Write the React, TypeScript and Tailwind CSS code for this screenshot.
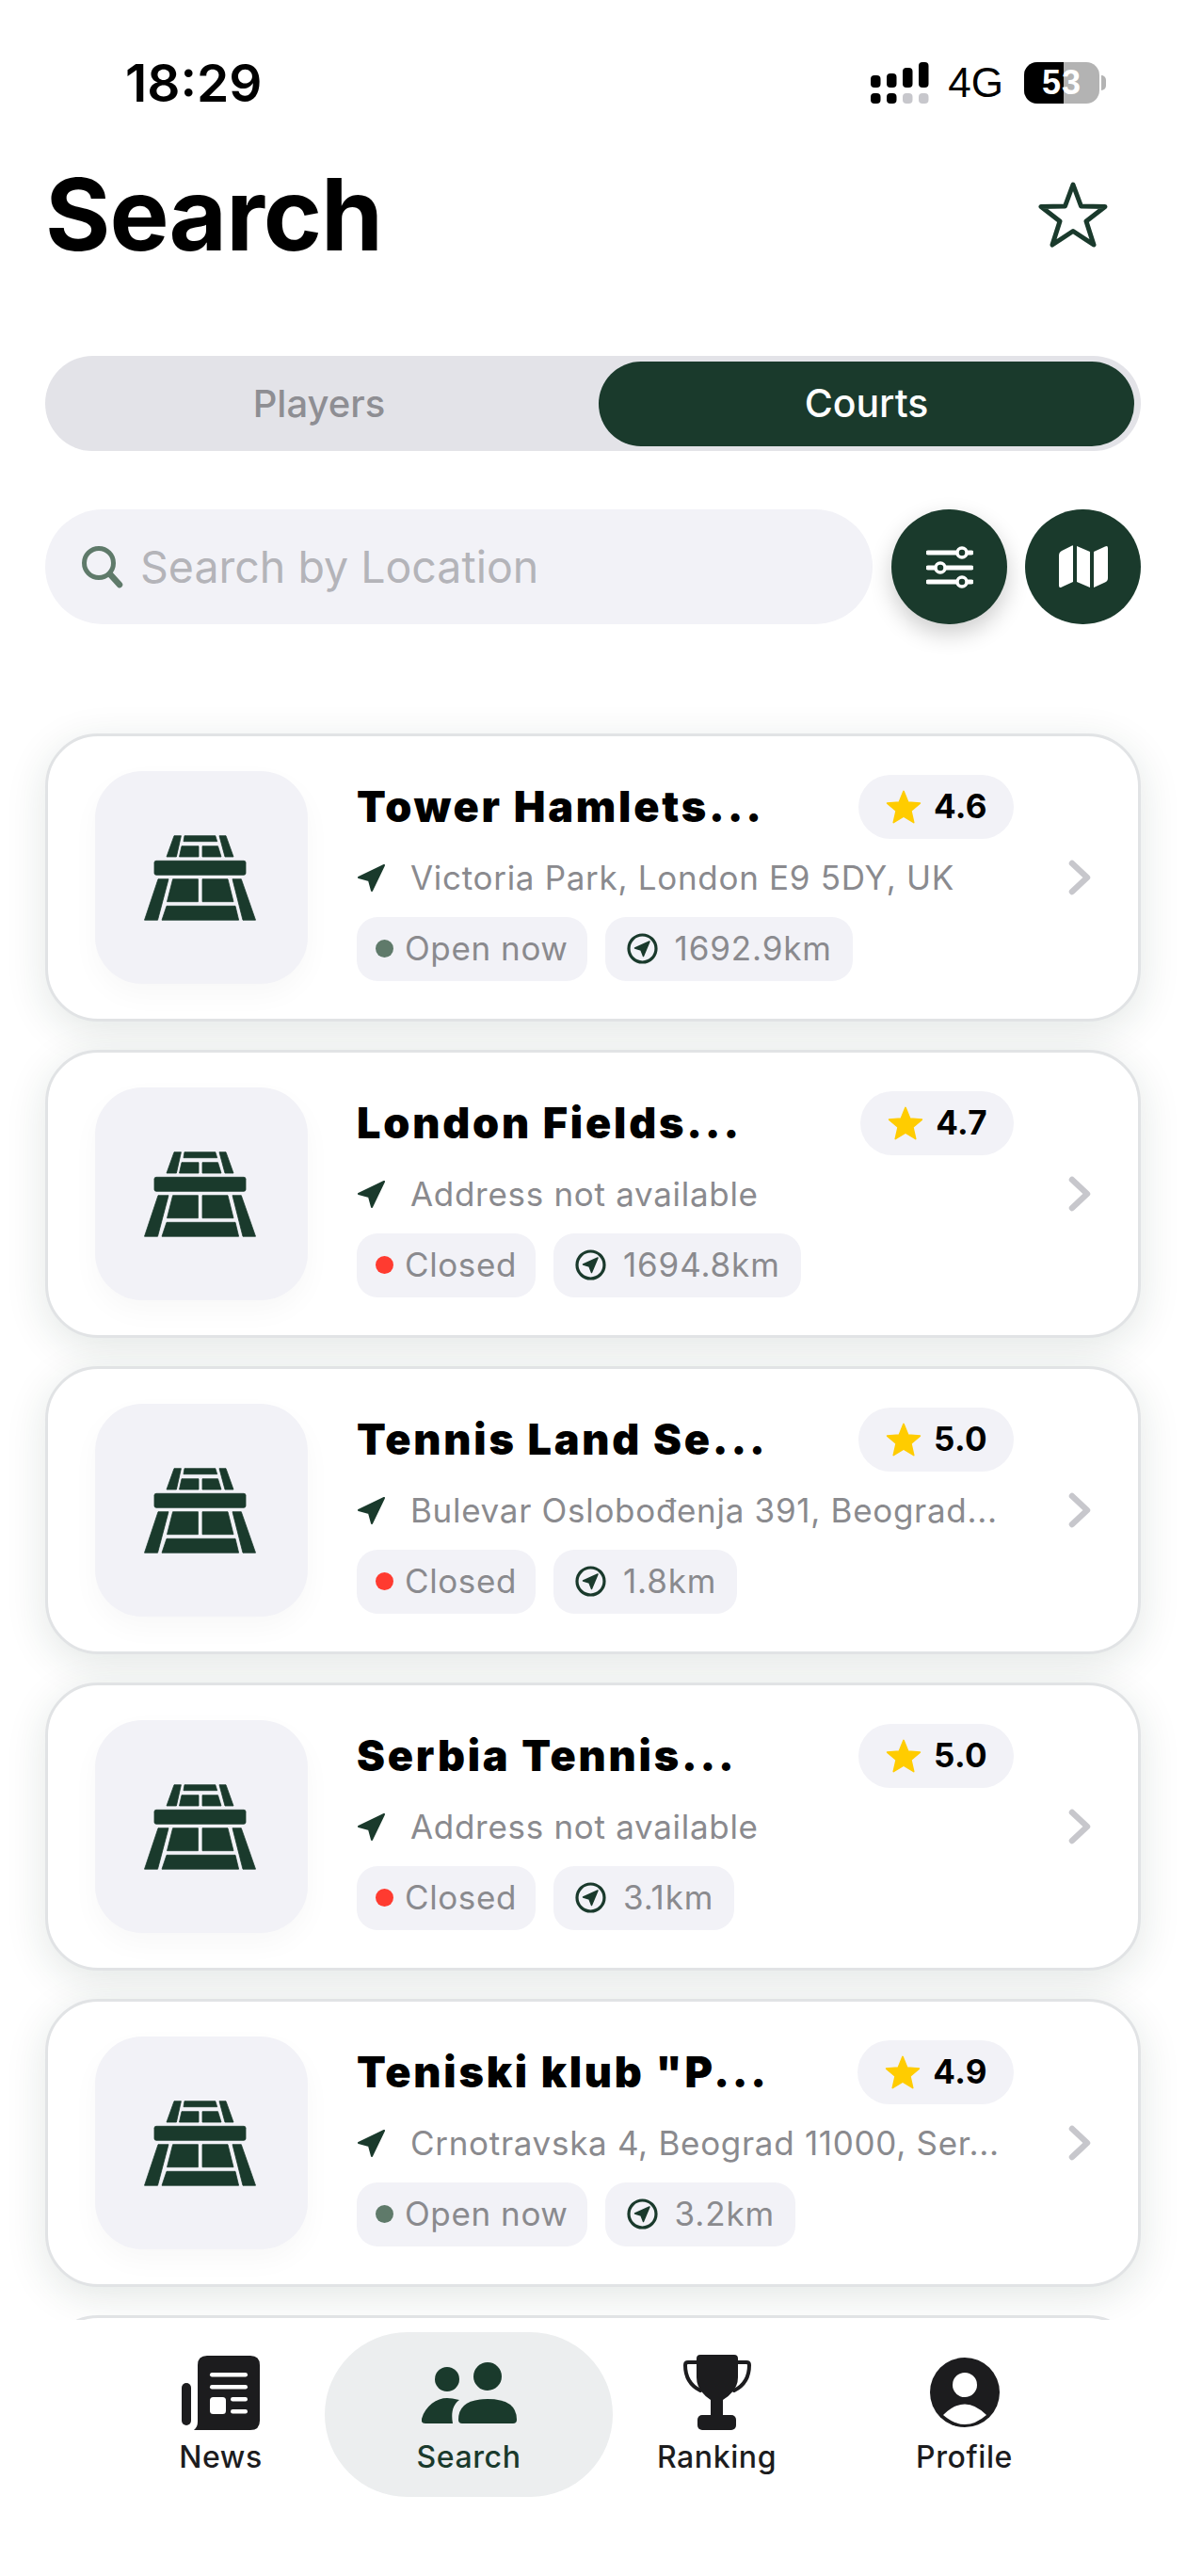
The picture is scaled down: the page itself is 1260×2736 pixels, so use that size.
import React from "react";

const GREEN = "#1a3a2c";

function CourtIcon() {
  const polys = [
    "32,0.7 39.4,0.7 34.4,23 24,23",
    "43,0.7 75.8,0.7 77.7,6.7 42,6.7",
    "40,11.7 58,11.7 58,23 37.5,23",
    "62,11.7 78.5,11.7 82,23 62,23",
    "80,0.7 87,0.7 95,23 86,23",
    "15,46.7 26,46.7 14.5,90.2 0.5,90.2",
    "30.6,46.7 57.4,46.7 57.4,70.7 24.5,70.7",
    "62,46.7 89,46.7 95,70.7 62,70.7",
    "24,75.3 97,75.3 100.6,90.2 19,90.2",
    "94,46.7 103.3,46.7 118.5,90.2 105,90.2",
  ];
  return (
    <svg width="119" height="91" viewBox="0 0 119 91" fill={GREEN} stroke={GREEN} strokeWidth="0.8" strokeLinejoin="round">
      {polys.map((p) => (
        <polygon key={p} points={p} />
      ))}
      <rect x="11" y="27.3" width="97" height="15" rx="2" />
    </svg>
  );
}

function NavArrow({ size = 31 }: { size?: number }) {
  return (
    <svg width={size} height={size} viewBox="0 0 31 31" fill={GREEN} stroke={GREEN} strokeWidth="2" strokeLinejoin="round">
      <path d="M29 2 L2 15 L13 18 L16 29 Z" />
    </svg>
  );
}

function DistanceIcon() {
  return (
    <svg width="33" height="33" viewBox="0 0 33 33" fill="none">
      <circle cx="16.5" cy="16.5" r="14.5" stroke={GREEN} strokeWidth="3.2" />
      <path d="M24 9 L8.5 16 L15 18 L17.5 24.5 Z" fill={GREEN} stroke={GREEN} strokeWidth="1.5" strokeLinejoin="round" />
    </svg>
  );
}

type Court = {
  name: string;
  rating: string;
  address: string;
  open: boolean;
  dist: string;
};

const courts: Court[] = [
  { name: "Tower Hamlets...", rating: "4.6", address: "Victoria Park, London E9 5DY, UK", open: true, dist: "1692.9km" },
  { name: "London Fields...", rating: "4.7", address: "Address not available", open: false, dist: "1694.8km" },
  { name: "Tennis Land Se...", rating: "5.0", address: "Bulevar Oslobođenja 391, Beograd...", open: false, dist: "1.8km" },
  { name: "Serbia Tennis...", rating: "5.0", address: "Address not available", open: false, dist: "3.1km" },
  { name: 'Teniski klub "P...', rating: "4.9", address: "Crnotravska 4, Beograd 11000, Ser...", open: true, dist: "3.2km" },
];

function CourtCard({ c }: { c: Court }) {
  return (
    <div className="flex h-[306px] shrink-0 items-center rounded-[56px] border-[3px] border-[#e1e3e5] bg-white pl-[50px] pr-[50px] shadow-[0_10px_44px_rgba(26,58,44,0.12)]">
      <div className="flex h-[226px] w-[226px] shrink-0 items-center justify-center rounded-[50px] bg-[#f2f2f7] pr-[3px] shadow-[0_12px_30px_rgba(0,0,0,0.03)]">
        <CourtIcon />
      </div>
      <div className="ml-[52px] flex min-w-0 flex-1 flex-col">
        <div className="flex h-[68px] items-center justify-between">
          <span className="whitespace-nowrap text-[45px] font-black leading-none tracking-[2.8px] text-black">{c.name}</span>
          <span className="flex h-[68px] items-center gap-[13px] rounded-full bg-[#f2f2f7] pl-[29px] pr-[28px] text-[35px] font-bold tracking-[0.4px] text-black">
            <svg width="38" height="38" viewBox="0 0 24 24" fill="#ffcc00" stroke="#ffcc00" strokeWidth="1" strokeLinejoin="round">
              <path d="M12 1.5 L15 8.8 L23 9.5 L17 14.7 L18.8 22.5 L12 18.4 L5.2 22.5 L7 14.7 L1 9.5 L9 8.8 Z" />
            </svg>
            {c.rating}
          </span>
        </div>
        <div className="mt-[19px] flex h-[46px] items-center gap-[26px] whitespace-nowrap text-[35px] leading-none tracking-[0.7px] text-[#8a8a8e]">
          <NavArrow />
          <span>{c.address}</span>
        </div>
        <div className="mt-[18px] flex gap-[19px]">
          <span className="flex h-[68px] items-center gap-[12px] rounded-[22px] bg-[#f2f2f7] pl-[20px] pr-[20px] text-[35px] tracking-[0.6px] text-[#8a8a8e]">
            <span className={c.open ? "h-[19px] w-[19px] rounded-full bg-[#5f7a6a]" : "h-[19px] w-[19px] rounded-full bg-[#ff3b30]"} />
            {c.open ? "Open now" : "Closed"}
          </span>
          <span className="flex h-[68px] items-center gap-[18px] rounded-[22px] bg-[#f2f2f7] pl-[23px] pr-[22px] text-[35px] tracking-[0.85px] text-[#8a8a8e]">
            <DistanceIcon />
            {c.dist}
          </span>
        </div>
      </div>
      <svg className="ml-[58px] shrink-0" width="24" height="38" viewBox="0 0 24 38" fill="none" stroke="#c7c7cc" strokeWidth="6.5" strokeLinecap="round" strokeLinejoin="round">
        <path d="M4 4 L20 19 L4 34" />
      </svg>
    </div>
  );
}

function NavItem({ label, active, children }: { label: string; active?: boolean; children: React.ReactNode }) {
  return (
    <div
      className={
        active
          ? "-mx-[21px] flex h-[175px] w-[306px] shrink-0 flex-col items-center rounded-full bg-[#eceeef] pt-[22px]"
          : "flex h-[175px] w-[263px] shrink-0 flex-col items-center pt-[22px]"
      }
    >
      <div className="flex h-[84px] items-center justify-center">{children}</div>
      <span className={active ? "mt-[7px] text-[32px] font-medium leading-[40px] tracking-[0.6px] text-[#1a3a2c]" : "mt-[7px] text-[32px] font-medium leading-[40px] tracking-[0.6px] text-[#1c1c1e]"}>
        {label}
      </span>
    </div>
  );
}

export default function App() {
  return (
    <div className="flex h-[2736px] w-full flex-col overflow-hidden bg-white font-['Inter','Noto_Sans',sans-serif] text-black">
      {/* status bar */}
      <div className="flex h-[176px] shrink-0 items-center justify-between pl-[133px] pr-[85px]">
        <span className="text-[55px] font-semibold leading-none">18:29</span>
        <div className="flex items-center">
          <svg width="62" height="44" viewBox="0 0 62 44">
            <rect x="0" y="14" width="10.5" height="13" rx="4" fill="#000" />
            <rect x="17" y="12" width="10.5" height="15" rx="4" fill="#000" />
            <rect x="34" y="6" width="10.5" height="21" rx="4" fill="#000" />
            <rect x="51" y="0" width="10.5" height="27" rx="4" fill="#000" />
            <rect x="0" y="33" width="10.5" height="11" rx="4" fill="#000" />
            <rect x="17" y="33" width="10.5" height="11" rx="4" fill="#000" />
            <rect x="34" y="33" width="10.5" height="11" rx="4" fill="#c7c7cc" />
            <rect x="51" y="33" width="10.5" height="11" rx="4" fill="#c7c7cc" />
          </svg>
          <span className="ml-[20px] font-['Liberation_Sans',sans-serif] text-[44px] leading-none">4G</span>
          <div className="ml-[22px] flex items-center">
            <div className="relative flex h-[44px] w-[80px] items-center justify-center overflow-hidden rounded-[14px] bg-[#b3b3b3]">
              <div className="absolute inset-y-0 left-0 w-[42px] bg-black" />
              <span className="relative font-['Liberation_Sans',sans-serif] text-[36px] font-bold leading-none tracking-[1px] text-white">53</span>
            </div>
            <div className="ml-[2px] h-[16px] w-[5px] rounded-r-full bg-[#b3b3b3]" />
          </div>
        </div>
      </div>

      {/* title */}
      <div className="flex h-[104px] shrink-0 items-center justify-between pl-[48px] pr-[82px]">
        <h1 className="text-[106px] font-bold leading-none tracking-[-1px]">Search</h1>
        <svg width="76" height="72" viewBox="0 0 76 72" fill="none" stroke={GREEN} strokeWidth="5" strokeLinejoin="round">
          <path d="M38 4 L46.5 27 L72 27.5 L52 43 L60 68 L38 53.5 L16 68 L24 43 L4 27.5 L29.5 27 Z" />
        </svg>
      </div>

      {/* segmented */}
      <div className="mx-[48px] mt-[98px] flex h-[101px] shrink-0 items-center rounded-full bg-[#e3e3e8] pr-[7px]">
        <div className="flex flex-1 items-center justify-center pr-[6px] text-[40px] font-medium text-[#8e8e93]">Players</div>
        <div className="flex h-[90px] w-[569px] items-center justify-center rounded-full bg-[#1a3a2c] text-[41px] font-medium text-white">Courts</div>
      </div>

      {/* search row */}
      <div className="mx-[48px] mt-[62px] flex h-[122px] shrink-0 items-center">
        <div className="flex h-[122px] min-w-0 flex-1 items-center gap-[17px] rounded-full bg-[#f2f2f7] pl-[38px]">
          <svg width="46" height="46" viewBox="0 0 46 46" fill="none" stroke="#5f7a6a" strokeLinecap="round">
            <circle cx="19" cy="19" r="15.5" strokeWidth="5" />
            <path d="M31 31 L41 42" strokeWidth="6.5" />
          </svg>
          <span className="text-[46.5px] leading-none text-[#b4b4b9]">Search by Location</span>
        </div>
        <div className="ml-[20px] flex h-[122px] w-[123px] shrink-0 items-center justify-center rounded-full bg-[#1a3a2c] shadow-[0_10px_24px_rgba(0,0,0,0.2)]">
          <svg width="50" height="46" viewBox="0 0 50 46" fill="none" stroke="#fff" strokeWidth="5" strokeLinecap="round">
            <path d="M2 8 H48 M2 24 H48 M2 39 H48" />
            <circle cx="38" cy="8" r="5" fill="#1a3a2c" strokeWidth="3.5" />
            <circle cx="15" cy="24" r="5" fill="#1a3a2c" strokeWidth="3.5" />
            <circle cx="38" cy="39" r="5" fill="#1a3a2c" strokeWidth="3.5" />
          </svg>
        </div>
        <div className="ml-[19px] flex h-[122px] w-[123px] shrink-0 items-center justify-center rounded-full bg-[#1a3a2c]">
          <svg width="52" height="48" viewBox="0 0 52 48" fill="#fff">
            <path d="M15 2 Q15 1 14 1.5 L3 7 Q0 8.5 0 12 V44 Q0 47 3 45.5 L15 40 Z" />
            <path d="M19 2 L33 8 V46 L19 40 Z" />
            <path d="M37 8 L49 2.5 Q52 1 52 4 V36 Q52 39 49 40.5 L37 46 Z" />
          </svg>
        </div>
      </div>

      {/* list */}
      <div className="mx-[48px] mt-[116px] flex min-h-0 flex-1 flex-col gap-[30px] overflow-visible">
        {courts.map((c) => (
          <CourtCard key={c.name} c={c} />
        ))}
        <div className="h-[306px] shrink-0 rounded-[56px] border-[3px] border-[#e1e3e5] bg-white" />
      </div>

      {/* bottom nav */}
      <div className="relative z-10 flex h-[272px] shrink-0 items-start bg-white pl-[103px] pt-[13px]">
        <NavItem label="News">
          <svg width="83" height="79" viewBox="0 0 83 79">
            <rect x="0" y="29" width="10" height="45" rx="5" fill="#1c1c1e" />
            <path d="M17 10 Q17 0 27 0 H73 Q83 0 83 10 V69 Q83 79 73 79 H13 Q17 76 17 70 Z" fill="#1c1c1e" />
            <g fill="#fff">
              <rect x="30" y="18" width="40" height="4.5" rx="2.2" />
              <rect x="30" y="31" width="40" height="4.5" rx="2.2" />
              <rect x="30" y="44" width="17" height="18" rx="3.5" />
              <rect x="52" y="44" width="18" height="4.5" rx="2.2" />
              <rect x="52" y="57" width="18" height="4.5" rx="2.2" />
            </g>
          </svg>
        </NavItem>
        <NavItem label="Search" active>
          <svg width="101" height="66" viewBox="0 0 101 66" fill="#1a3a2c">
            <circle cx="70" cy="16" r="15" />
            <circle cx="27" cy="19" r="13" />
            <path d="M39 62 Q39 40 70 40 Q101 40 101 62 Q101 66 97 66 H43 Q39 66 39 62 Z" />
            <path d="M4 66 Q-1 66 0 61 C4 47 16 39 27 39 Q32 39 40 41 C33 46 31 55 33 66 Z" />
          </svg>
        </NavItem>
        <NavItem label="Ranking">
          <svg width="72" height="80" viewBox="0 0 72 80" fill="#1c1c1e">
            <path d="M18 0 H54 Q58 0 58 4 V24 Q58 38 42 48 V64 H29 V48 Q14 38 14 24 V4 Q14 0 18 0 Z" />
            <rect x="15" y="64" width="41" height="16" rx="5" />
            <path d="M14 8 H5 Q2 8 2 11 Q2 30 18 38 M58 8 H67 Q70 8 70 11 Q70 30 54 38" fill="none" stroke="#1c1c1e" strokeWidth="4" strokeLinecap="round" />
          </svg>
        </NavItem>
        <NavItem label="Profile">
          <svg width="74" height="74" viewBox="0 0 74 74">
            <circle cx="37" cy="37" r="37" fill="#1c1c1e" />
            <circle cx="37" cy="29" r="13" fill="#fff" />
            <path d="M14 61 Q37 38 60 61 Q37 81 14 61 Z" fill="#fff" />
          </svg>
        </NavItem>
      </div>
    </div>
  );
}
